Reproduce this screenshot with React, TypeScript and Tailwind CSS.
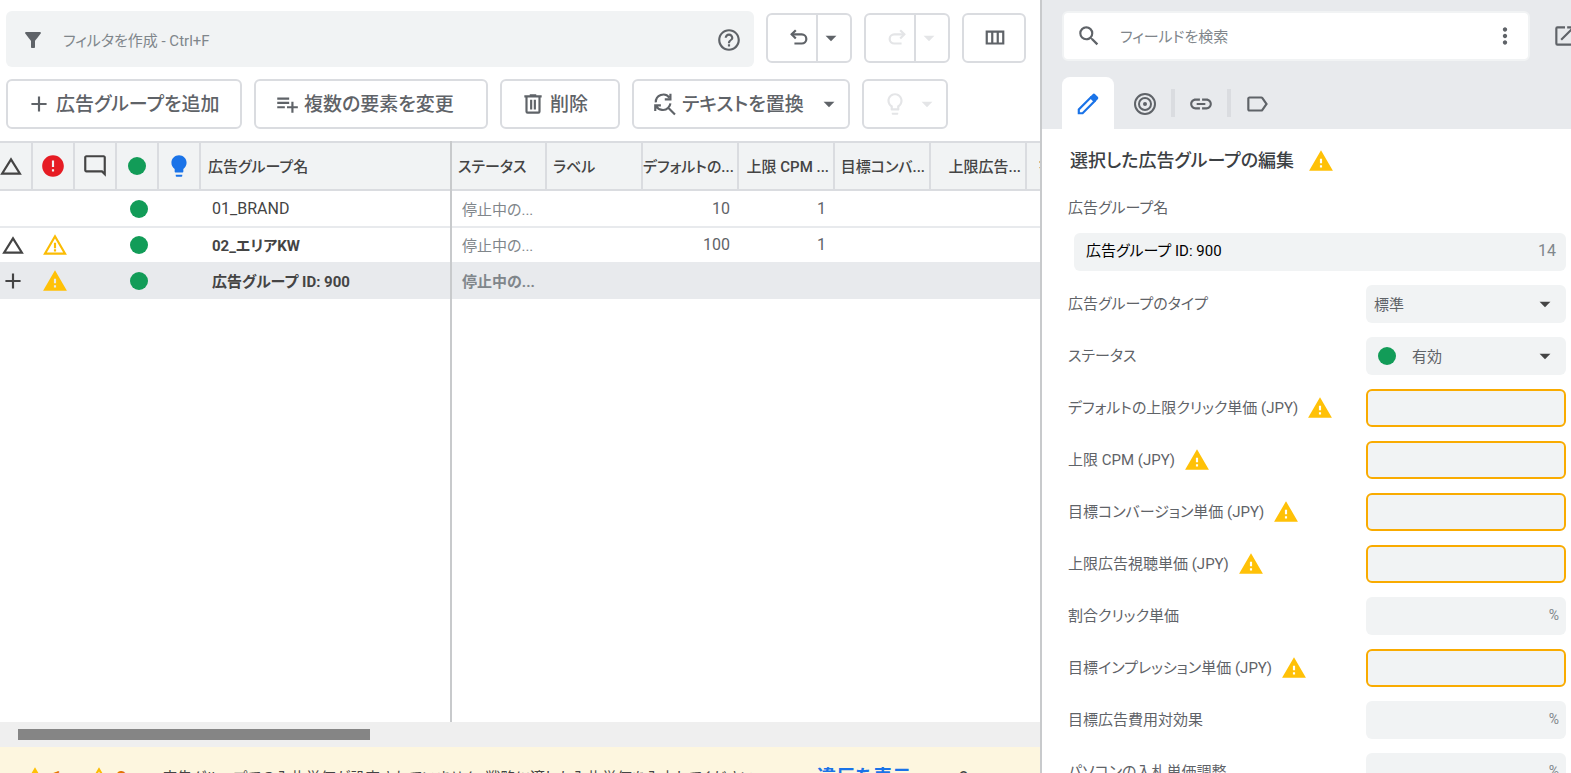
import type { ReactNode } from "react";
import {
  MdAdd,
  MdArrowDropDown,
  MdChangeHistory,
  MdError,
  MdFilterAlt,
  MdHelpOutline,
  MdLabelOutline,
  MdLightbulb,
  MdLightbulbOutline,
  MdLink,
  MdMoreVert,
  MdOpenInNew,
  MdOutlineModeComment,
  MdPlaylistAdd,
  MdSearch,
  MdWarning,
  MdWarningAmber,
} from "react-icons/md";

type IconProps = { className?: string };

function UndoIcon({ className }: IconProps) {
  return (
    <svg viewBox="0 0 24 24" className={className} fill="none" stroke="currentColor" strokeWidth="2.4">
      <path d="M8.5 3.5 4 8l4.5 4.5" />
      <path d="M4 8H15a5 5 0 0 1 0 10H7" />
    </svg>
  );
}

function ColumnsIcon({ className }: IconProps) {
  return (
    <svg viewBox="0 0 24 24" className={className} fill="none" stroke="currentColor" strokeWidth="2.4">
      <path d="M3 5h18v13H3zM9 5v13M15 5v13" />
    </svg>
  );
}

function TrashIcon({ className }: IconProps) {
  return (
    <svg viewBox="0 0 24 24" className={className} fill="none" stroke="currentColor" strokeWidth="2">
      <path d="M4 5h16M9 4h6M6 5v14a1 1 0 0 0 1 1h10a1 1 0 0 0 1-1V5M10.3 8v9M13.7 8v9" />
    </svg>
  );
}

function ReplaceIcon({ className }: IconProps) {
  return (
    <svg viewBox="0 0 24 24" className={className} fill="none" stroke="currentColor" strokeWidth="2">
      <path d="M3.5 10.5a7 7 0 0 1 12.5-4.5M17 2.5v5.2h-5.2" />
      <path d="M3 18.5v-5.2h5.2M4 14a7 7 0 0 0 11 1.5 7 7 0 0 0 2-4M15 15.5l6.2 6.2" />
    </svg>
  );
}

function PencilIcon({ className }: IconProps) {
  return (
    <svg viewBox="0 0 24 24" className={className} fill="none" stroke="currentColor" strokeWidth="2">
      <path d="M3.5 20.5v-3.5L14.5 6l3.5 3.5L7 20.5z" />
      <path
        d="M14 5.3l2.3-2.3a1.6 1.6 0 0 1 2.3 0l2.4 2.4a1.6 1.6 0 0 1 0 2.3L18.7 10z"
        fill="currentColor"
        stroke="none"
      />
    </svg>
  );
}

function TargetIcon({ className }: IconProps) {
  return (
    <svg viewBox="0 0 24 24" className={className} fill="none" stroke="currentColor" strokeWidth="2">
      <circle cx="12" cy="12" r="10" />
      <circle cx="12" cy="12" r="6" />
      <circle cx="12" cy="12" r="2" fill="currentColor" stroke="none" />
    </svg>
  );
}

function StatusDot() {
  return <span className="inline-block size-[18px] rounded-full bg-[#129c58] align-middle" />;
}

type ToolButtonProps = {
  label?: string;
  ariaLabel?: string;
  disabled?: boolean;
  className: string;
  children: ReactNode;
};

function ToolButton({ label, ariaLabel, disabled, className, children }: ToolButtonProps) {
  return (
    <button
      type="button"
      aria-label={ariaLabel}
      disabled={disabled}
      className={`flex h-[50px] shrink-0 items-center rounded-md border-2 border-[#dadce0] bg-white text-[19px] font-medium text-[#5f6368] disabled:text-[#e4e5e7] ${className}`}
    >
      {children}
      {label && <span className="pt-0.5 whitespace-nowrap">{label}</span>}
    </button>
  );
}

function SplitButton({
  name,
  disabled,
  children,
}: {
  name: string;
  disabled?: boolean;
  children: ReactNode;
}) {
  return (
    <div
      className={`flex h-[50px] w-[86px] shrink-0 rounded-md border-2 border-[#dadce0] ${
        disabled ? "text-[#e4e5e7]" : "text-[#5f6368]"
      }`}
    >
      <button
        type="button"
        aria-label={name}
        disabled={disabled}
        className="flex w-[50px] items-center justify-end border-r-2 border-[#dadce0] pr-[6px]"
      >
        {children}
      </button>
      <button
        type="button"
        aria-label={`${name}の履歴`}
        disabled={disabled}
        className="flex flex-1 items-center"
      >
        <MdArrowDropDown className="size-[26px]" />
      </button>
    </div>
  );
}

function Toolbar() {
  return (
    <div className="flex flex-col gap-3 pt-[11px] pr-[14px] pb-3 pl-[6px]">
      <div className="flex gap-3">
        <label className="flex h-14 min-w-0 flex-1 items-center rounded-md bg-[#f1f3f4] pt-0.5 pr-3 pl-[15px] text-[#5f6368]">
          <MdFilterAlt className="size-6 shrink-0" />
          <input
            type="text"
            aria-label="フィルタを作成"
            placeholder="フィルタを作成 - Ctrl+F"
            className="ml-[18px] min-w-0 flex-1 bg-transparent pt-0.5 text-[15px] outline-none placeholder:text-[#80868b]"
          />
          <MdHelpOutline className="size-[26px] shrink-0" />
        </label>
        <div className="flex gap-3 pt-0.5">
          <SplitButton name="元に戻す">
            <UndoIcon className="size-[22px]" />
          </SplitButton>
          <SplitButton name="やり直し" disabled>
            <UndoIcon className="size-[22px] -scale-x-100" />
          </SplitButton>
          <ToolButton ariaLabel="表示項目" className="w-16 justify-center pl-0.5">
            <ColumnsIcon className="size-[22px]" />
          </ToolButton>
        </div>
      </div>
      <div className="flex gap-3">
        <ToolButton label="広告グループを追加" className="w-[236px] gap-1 pl-[18px]">
          <MdAdd className="size-[26px]" />
        </ToolButton>
        <ToolButton label="複数の要素を変更" className="w-[234px] gap-1 pl-[18px]">
          <MdPlaylistAdd className="size-[26px]" />
        </ToolButton>
        <ToolButton label="削除" className="w-[120px] gap-1 pl-[18px]">
          <TrashIcon className="size-[26px]" />
        </ToolButton>
        <button
          type="button"
          className="flex h-[50px] w-[218px] shrink-0 items-center gap-1 rounded-md border-2 border-[#dadce0] pr-[6px] pl-[18px] text-[19px] font-medium text-[#5f6368]"
        >
          <ReplaceIcon className="size-[26px]" />
          <span className="flex-1 pt-0.5 text-left whitespace-nowrap">テキストを置換</span>
          <MdArrowDropDown className="size-[26px]" />
        </button>
        <ToolButton ariaLabel="最適化案" disabled className="w-[86px] gap-[6px] pl-[18px]">
          <MdLightbulbOutline className="size-[26px]" />
          <MdArrowDropDown className="size-[26px]" />
        </ToolButton>
      </div>
    </div>
  );
}

const rows = [
  { name: "01_BRAND", change: "", issue: "", cpc: "10", cpm: "1" },
  { name: "02_エリアKW", change: "edited", issue: "outline", cpc: "100", cpm: "1" },
  { name: "広告グループ ID: 900", change: "added", issue: "filled", cpc: "", cpm: "" },
];

const rowStyles = [
  "h-[37px] border-b-2 border-[#e8eaed]",
  "h-[35px] font-bold",
  "h-[37px] bg-[#e8eaed] font-bold",
];

const iconHeader = "border-r-2 border-[#dadce0] p-0";

function FrozenTable() {
  return (
    <table className="w-full table-fixed border-collapse text-[15px] text-[#444]">
      <colgroup>
        <col className="w-8" />
        <col className="w-[42px]" />
        <col className="w-[42px]" />
        <col className="w-[42px]" />
        <col className="w-[42px]" />
        <col />
      </colgroup>
      <thead>
        <tr className="h-12 border-y-2 border-[#dadce0] bg-[#f1f3f4]">
          <th className={iconHeader} aria-label="変更">
            <MdChangeHistory className="-ml-0.5 size-[26px]" />
          </th>
          <th className={iconHeader} aria-label="エラー">
            <MdError className="mx-auto size-[26px] text-[#e61c24]" />
          </th>
          <th className={iconHeader} aria-label="コメント">
            <MdOutlineModeComment className="mx-auto size-[26px]" />
          </th>
          <th className={`${iconHeader} leading-none`} aria-label="有効">
            <StatusDot />
          </th>
          <th className={iconHeader} aria-label="最適化案">
            <MdLightbulb className="mx-auto size-[26px] text-[#1a73e8]" />
          </th>
          <th className="pt-0.5 pr-0 pb-0 pl-[7px] text-left font-medium">広告グループ名</th>
        </tr>
      </thead>
      <tbody>
        {rows.map((row, i) => (
          <tr key={row.name} className={rowStyles[i]}>
            <td className="p-0">
              {row.change === "edited" && <MdChangeHistory className="size-[26px]" />}
              {row.change === "added" && <MdAdd className="size-[26px]" />}
            </td>
            <td className="p-0 pl-1">
              {row.issue === "outline" && (
                <MdWarningAmber className="mx-auto size-[26px] text-[#fbbc04]" />
              )}
              {row.issue === "filled" && (
                <MdWarning className="mx-auto size-[26px] text-[#ffc107]" />
              )}
            </td>
            <td className="p-0" />
            <td className="p-0 pl-1 text-center leading-none">
              <StatusDot />
            </td>
            <td className="p-0" />
            <td className={i === 0 ? "p-0 pl-3 text-base" : "p-0 pt-[3px] pl-3"}>{row.name}</td>
          </tr>
        ))}
      </tbody>
    </table>
  );
}

const valueHeader =
  "overflow-hidden border-r-2 border-[#dadce0] pt-0.5 pb-0 font-medium whitespace-nowrap";
const numberHeader = `${valueHeader} pr-1 pl-0 text-right`;
const numberCell = "p-0 pr-2 text-right text-base font-normal text-[#5f6368]";

function ValueTable() {
  return (
    <table className="w-[670px] table-fixed border-collapse text-[15px] text-[#444]">
      <colgroup>
        <col className="w-[94px]" />
        <col className="w-24" />
        <col className="w-24" />
        <col className="w-24" />
        <col className="w-24" />
        <col className="w-24" />
        <col className="w-24" />
      </colgroup>
      <thead>
        <tr className="h-12 border-y-2 border-[#dadce0] bg-[#f1f3f4]">
          <th className={`${valueHeader} pl-[6px] text-left`}>ステータス</th>
          <th className={`${valueHeader} pl-[6px] text-left`}>ラベル</th>
          <th className={numberHeader}>デフォルトの...</th>
          <th className={numberHeader}>上限 CPM ...</th>
          <th className={numberHeader}>目標コンバ...</th>
          <th className={numberHeader}>上限広告...</th>
          <th className={`${valueHeader} pl-3 text-left`}>割...</th>
        </tr>
      </thead>
      <tbody>
        {rows.map((row, i) => (
          <tr key={row.name} className={rowStyles[i]}>
            <td
              className={`p-0 pt-[3px] pl-[10px] whitespace-nowrap text-[#80868b] ${
                i === 2 ? "font-bold" : "font-normal"
              }`}
            >
              停止中の...
            </td>
            <td />
            <td className={numberCell}>{row.cpc}</td>
            <td className={numberCell}>{row.cpm}</td>
            <td />
            <td />
            <td />
          </tr>
        ))}
      </tbody>
    </table>
  );
}

function IssueBar() {
  return (
    <div className="h-[26px] shrink-0 overflow-hidden bg-[#fdf6df]">
      <div className="flex h-[62px] items-center text-[15px] whitespace-nowrap text-[#444]">
        <div className="flex w-[162px] shrink-0 items-center pl-[22px] text-lg font-bold text-[#e37400]">
          <MdWarning className="size-[26px] text-[#ffc107]" />
          <span className="ml-1">1</span>
          <MdWarningAmber className="ml-6 size-[26px] text-[#fbbc04]" />
          <span className="ml-1">2</span>
        </div>
        <span className="w-[655px] shrink-0">
          広告グループでの入札単価が設定されていません。戦略に適した入札単価を入力してください。
        </span>
        <a href="#violations" className="text-[19px] font-bold text-[#1a73e8]">
          違反を表示
        </a>
        <span className="ml-12 text-lg">?</span>
      </div>
    </div>
  );
}

type Field = { id: string; label: string; warning?: boolean; suffix?: string };

const fields: Field[] = [
  { id: "max-cpc", label: "デフォルトの上限クリック単価 (JPY)", warning: true },
  { id: "max-cpm", label: "上限 CPM (JPY)", warning: true },
  { id: "target-cpa", label: "目標コンバージョン単価 (JPY)", warning: true },
  { id: "max-cpv", label: "上限広告視聴単価 (JPY)", warning: true },
  { id: "percent-cpc", label: "割合クリック単価", suffix: "%" },
  { id: "target-cpm", label: "目標インプレッション単価 (JPY)", warning: true },
  { id: "target-roas", label: "目標広告費用対効果", suffix: "%" },
  { id: "desktop-bid", label: "パソコンの入札単価調整", suffix: "%" },
];

function FieldRow({ id, label, warning, children }: Field & { children: ReactNode }) {
  return (
    <div className="flex h-[38px] shrink-0 items-center">
      <label htmlFor={id} className="whitespace-nowrap">
        {label}
      </label>
      {warning && <MdWarning className="ml-[9px] size-[26px] shrink-0 text-[#ffc107]" />}
      <div className="relative ml-auto h-full w-[200px] shrink-0">{children}</div>
    </div>
  );
}

const selectStyle =
  "size-full appearance-none rounded-md bg-[#f1f3f4] pt-0.5 pr-8 text-[15px] text-[#5f6368] outline-none";

function EditPanel() {
  return (
    <aside className="flex w-[531px] shrink-0 flex-col overflow-hidden border-l-2 border-[#c8cacc] text-[15px] text-[#5f6368]">
      <header className="shrink-0 bg-[#e8eaed] pt-[11px] pl-5">
        <div className="flex items-center">
          <label className="flex h-[50px] w-[468px] shrink-0 items-center rounded-md border-2 border-[#f1f3f4] bg-white pr-[10px] pl-3">
            <MdSearch className="size-[26px] shrink-0" />
            <input
              type="text"
              aria-label="フィールドを検索"
              placeholder="フィールドを検索"
              className="ml-[18px] min-w-0 flex-1 bg-transparent pt-0.5 outline-none placeholder:text-[#80868b]"
            />
            <MdMoreVert className="size-[26px]" />
          </label>
          <button type="button" aria-label="別ウィンドウで開く" className="ml-[22px] shrink-0">
            <MdOpenInNew className="size-[26px]" />
          </button>
        </div>
        <nav className="mt-4 flex h-[52px] items-center">
          <button
            type="button"
            aria-label="編集"
            className="flex h-full w-[52px] items-center justify-center rounded-t-lg bg-white pt-0.5 text-[#1a73e8]"
          >
            <PencilIcon className="size-[26px]" />
          </button>
          <button type="button" aria-label="ターゲット" className="flex w-[57px] justify-center pt-0.5 pl-1">
            <TargetIcon className="size-6" />
          </button>
          <span className="h-7 w-1 bg-[#dadce0]" />
          <button type="button" aria-label="リンク" className="flex w-[52px] justify-center pt-0.5">
            <MdLink className="size-[26px]" />
          </button>
          <span className="h-7 w-1 bg-[#dadce0]" />
          <button type="button" aria-label="ラベル" className="flex w-[52px] justify-center pt-0.5">
            <MdLabelOutline className="size-[26px]" />
          </button>
        </nav>
      </header>

      <div className="flex min-h-0 flex-1 flex-col overflow-hidden pr-[5px] pl-[26px]">
        <h2 className="flex h-[61px] shrink-0 items-center gap-[14px] pt-0.5 pl-[2px] text-lg font-medium text-[#3c4043]">
          選択した広告グループの編集
          <MdWarning className="size-[26px] text-[#ffc107]" />
        </h2>
        <label htmlFor="ad-group-name" className="h-[43px] shrink-0 pt-[7px]">
          広告グループ名
        </label>
        <div className="relative ml-[6px] h-[38px] shrink-0">
          <input
            id="ad-group-name"
            type="text"
            defaultValue="広告グループ ID: 900"
            className="size-full rounded-md bg-[#f1f3f4] pr-12 pb-[5px] pl-3 text-black outline-none"
          />
          <span className="absolute top-1.5 right-2.5 text-base text-[#80868b]">14</span>
        </div>
        <form className="mt-[14px] flex flex-col gap-[14px]">
          <FieldRow id="type" label="広告グループのタイプ">
            <select id="type" className={`${selectStyle} pl-2`}>
              <option>標準</option>
            </select>
            <MdArrowDropDown className="pointer-events-none absolute top-[6px] right-2 size-[26px] text-[#444]" />
          </FieldRow>
          <FieldRow id="status" label="ステータス">
            <select id="status" className={`${selectStyle} pl-[46px]`}>
              <option>有効</option>
            </select>
            <span className="pointer-events-none absolute top-[10px] left-3 size-[18px] rounded-full bg-[#129c58]" />
            <MdArrowDropDown className="pointer-events-none absolute top-[6px] right-2 size-[26px] text-[#444]" />
          </FieldRow>
          {fields.map((field) => (
            <FieldRow key={field.id} {...field}>
              <input
                id={field.id}
                type="text"
                className={
                  field.warning
                    ? "size-full rounded-md border-2 border-[#f9ab00] bg-[#f1f3f4] px-2 outline-none"
                    : "size-full rounded-md bg-[#f1f3f4] pr-6 pl-2 outline-none"
                }
              />
              {field.suffix && (
                <span className="absolute top-2 right-[7px] text-sm text-[#80868b]">
                  {field.suffix}
                </span>
              )}
            </FieldRow>
          ))}
        </form>
      </div>
    </aside>
  );
}

export default function App() {
  return (
    <div
      lang="ja"
      className="flex h-screen overflow-hidden bg-white font-[Roboto,'Noto_Sans_CJK_JP',sans-serif] [font-feature-settings:'palt']"
    >
      <main className="flex min-w-0 flex-1 flex-col">
        <Toolbar />
        <div className="flex min-h-0 flex-1">
          <div className="w-[452px] shrink-0 border-r-2 border-[#c8cacc]">
            <FrozenTable />
          </div>
          <div className="min-w-0 flex-1 overflow-hidden">
            <ValueTable />
          </div>
        </div>
        <div className="h-[25px] shrink-0 bg-[#efefef] px-[18px] py-[7px]">
          <div className="h-[11px] w-[352px] bg-[#858585]" />
        </div>
        <IssueBar />
      </main>
      <EditPanel />
    </div>
  );
}
